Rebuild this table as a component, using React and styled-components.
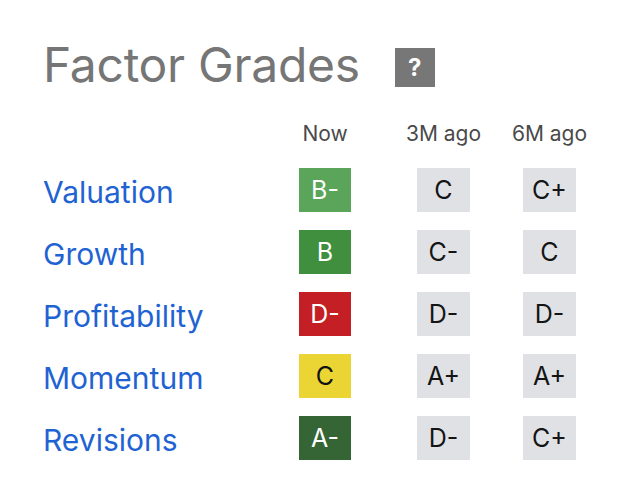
import React from "react";
import styled, { createGlobalStyle } from "styled-components";

const Global = createGlobalStyle`
  html, body { margin: 0; padding: 0; background: #fff; }
  body { font-family: Inter, "Noto Sans", sans-serif; }
`;

const Page = styled.div`
  width: 630px;
  height: 488px;
  box-sizing: border-box;
  padding: 34px 0 0 43px;
`;

const TitleRow = styled.div`
  display: flex;
  align-items: center;
  gap: 35px;
`;

const Title = styled.h1`
  margin: 0;
  font-size: 48px;
  font-weight: 400;
  color: #767676;
  line-height: 62px;
  letter-spacing: -0.3px;
`;

const HelpBox = styled.span`
  width: 40px;
  height: 39px;
  background: #777;
  color: #fff;
  font-weight: 700;
  font-size: 24px;
  display: flex;
  align-items: center;
  justify-content: center;
  margin-top: 4px;
`;

const Grid = styled.div`
  display: grid;
  grid-template-columns: 256px 118px 106px 53px;
  grid-template-rows: 26px repeat(5, 44px);
  row-gap: 18px;
  margin-top: 28px;
`;

const HeaderRow = styled.div`
  display: contents;
`;

const Cell = styled.div`
  width: ${(p) => p.$w || 53}px;
  display: flex;
  align-items: flex-start;
  justify-content: center;
  justify-self: start;
`;

const HeaderText = styled.span`
  white-space: nowrap;
  font-size: 21px;
  line-height: 20px;
  color: #4a4a4a;
`;

const Label = styled.a`
  font-size: 30px;
  color: #1f63d3;
  text-decoration: none;
  align-self: center;
  line-height: 1;
  margin-top: 3px;
`;

const Badge = styled.div`
  width: ${(p) => p.$w || 53}px;
  height: 44px;
  background: ${(p) => p.$bg};
  color: ${(p) => p.$fg};
  display: flex;
  align-items: center;
  justify-content: center;
  font-size: 25px;
  justify-self: start;
`;

const nowColors = {
  "B-": ["#5aa55a", "#fff"],
  B: ["#3f8f3f", "#fff"],
  "D-": ["#c31f24", "#fff"],
  C: ["#ebd534", "#111"],
  "A-": ["#356535", "#fff"],
};

const rows = [
  ["Valuation", "B-", "C", "C+"],
  ["Growth", "B", "C-", "C"],
  ["Profitability", "D-", "D-", "D-"],
  ["Momentum", "C", "A+", "A+"],
  ["Revisions", "A-", "D-", "C+"],
];

export default function App() {
  return (
    <Page>
      <Global />
      <TitleRow>
        <Title>Factor Grades</Title>
        <HelpBox>?</HelpBox>
      </TitleRow>
      <Grid>
        <HeaderRow>
          <span />
          <Cell $w={52}><HeaderText>Now</HeaderText></Cell>
          <Cell><HeaderText>3M ago</HeaderText></Cell>
          <Cell><HeaderText>6M ago</HeaderText></Cell>
        </HeaderRow>
        {rows.map(([name, now, m3, m6]) => (
          <React.Fragment key={name}>
            <Label href="#">{name}</Label>
            <Badge $w={52} $bg={nowColors[now][0]} $fg={nowColors[now][1]}>{now}</Badge>
            <Badge $bg="#e0e1e5" $fg="#141414">{m3}</Badge>
            <Badge $bg="#e0e1e5" $fg="#141414">{m6}</Badge>
          </React.Fragment>
        ))}
      </Grid>
    </Page>
  );
}
